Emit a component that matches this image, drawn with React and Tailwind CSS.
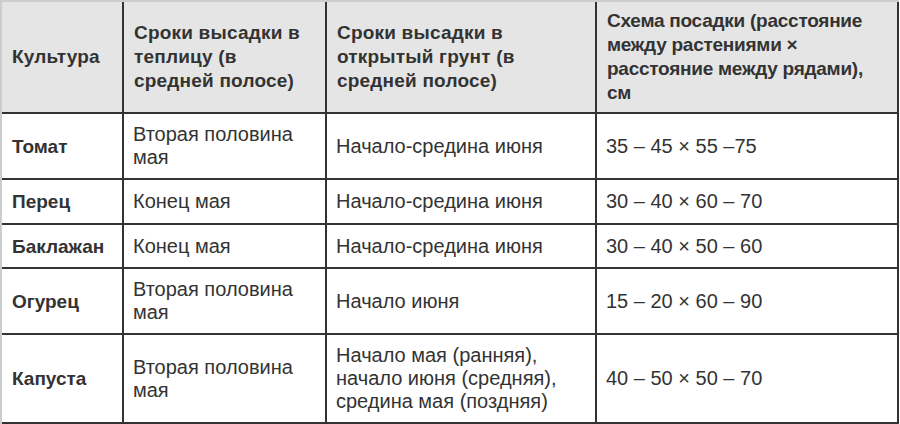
import React from 'react'

const rows = [
    { crop: 'Томат', greenhouse: ['Вторая половина', 'мая'], open: ['Начало-средина июня'], scheme: '35 – 45 × 55 –75' },
    { crop: 'Перец', greenhouse: ['Конец мая'], open: ['Начало-средина июня'], scheme: '30 – 40 × 60 – 70' },
    { crop: 'Баклажан', greenhouse: ['Конец мая'], open: ['Начало-средина июня'], scheme: '30 – 40 × 50 – 60' },
    { crop: 'Огурец', greenhouse: ['Вторая половина', 'мая'], open: ['Начало июня'], scheme: '15 – 20 × 60 – 90' },
    {
        crop: 'Капуста',
        greenhouse: ['Вторая половина', 'мая'],
        open: ['Начало мая (ранняя),', 'начало июня (средняя),', 'средина мая (поздняя)'],
        scheme: '40 – 50 × 50 – 70',
    },
]

const Lines = ({ lines }) =>
    lines.map((line, i) => (
        <React.Fragment key={i}>
            {i > 0 && <br />}
            {line}
        </React.Fragment>
    ))

const HeadCell = ({ children, tight }) => (
    <div
        className={
            'flex items-center bg-[#e5e5e5] pl-[10px] text-[19px] font-bold leading-[24px]' +
            (tight ? ' tracking-[-0.25px]' : ' tracking-[0.2px]')
        }
    >
        <div className="whitespace-nowrap">{children}</div>
    </div>
)

const Cell = ({ children, bold }) => (
    <div
        className={
            'flex items-center bg-white pl-[9px] leading-[23px]' +
            (bold ? ' pl-[10px] text-[19px] font-bold' : ' text-[20px]')
        }
    >
        <div className="whitespace-nowrap">{children}</div>
    </div>
)

const App = () => {
    return (
        <div className="h-[424px] w-[900px] bg-white font-['Liberation_Sans',Arial,sans-serif] text-[#333]">
            <div className="grid w-[899px] grid-cols-[120px_201px_268px_300px] grid-rows-[110px_64px_43px_42px_64px_87px] gap-[2px] border-l-2 border-t-2 border-[#cdcdcd] bg-[#333] pr-[2px] pb-[2px]">
                <HeadCell>Культура</HeadCell>
                <HeadCell>
                    <Lines lines={['Сроки высадки в', 'теплицу (в', 'средней полосе)']} />
                </HeadCell>
                <HeadCell>
                    <Lines lines={['Сроки высадки в', 'открытый грунт (в', 'средней полосе)']} />
                </HeadCell>
                <HeadCell tight>
                    <Lines
                        lines={['Схема посадки (расстояние', 'между растениями ×', 'расстояние между рядами),', 'см']}
                    />
                </HeadCell>
                {rows.map((row) => (
                    <React.Fragment key={row.crop}>
                        <Cell bold>{row.crop}</Cell>
                        <Cell>
                            <Lines lines={row.greenhouse} />
                        </Cell>
                        <Cell>
                            <Lines lines={row.open} />
                        </Cell>
                        <Cell>{row.scheme}</Cell>
                    </React.Fragment>
                ))}
            </div>
        </div>
    )
}

export default App
